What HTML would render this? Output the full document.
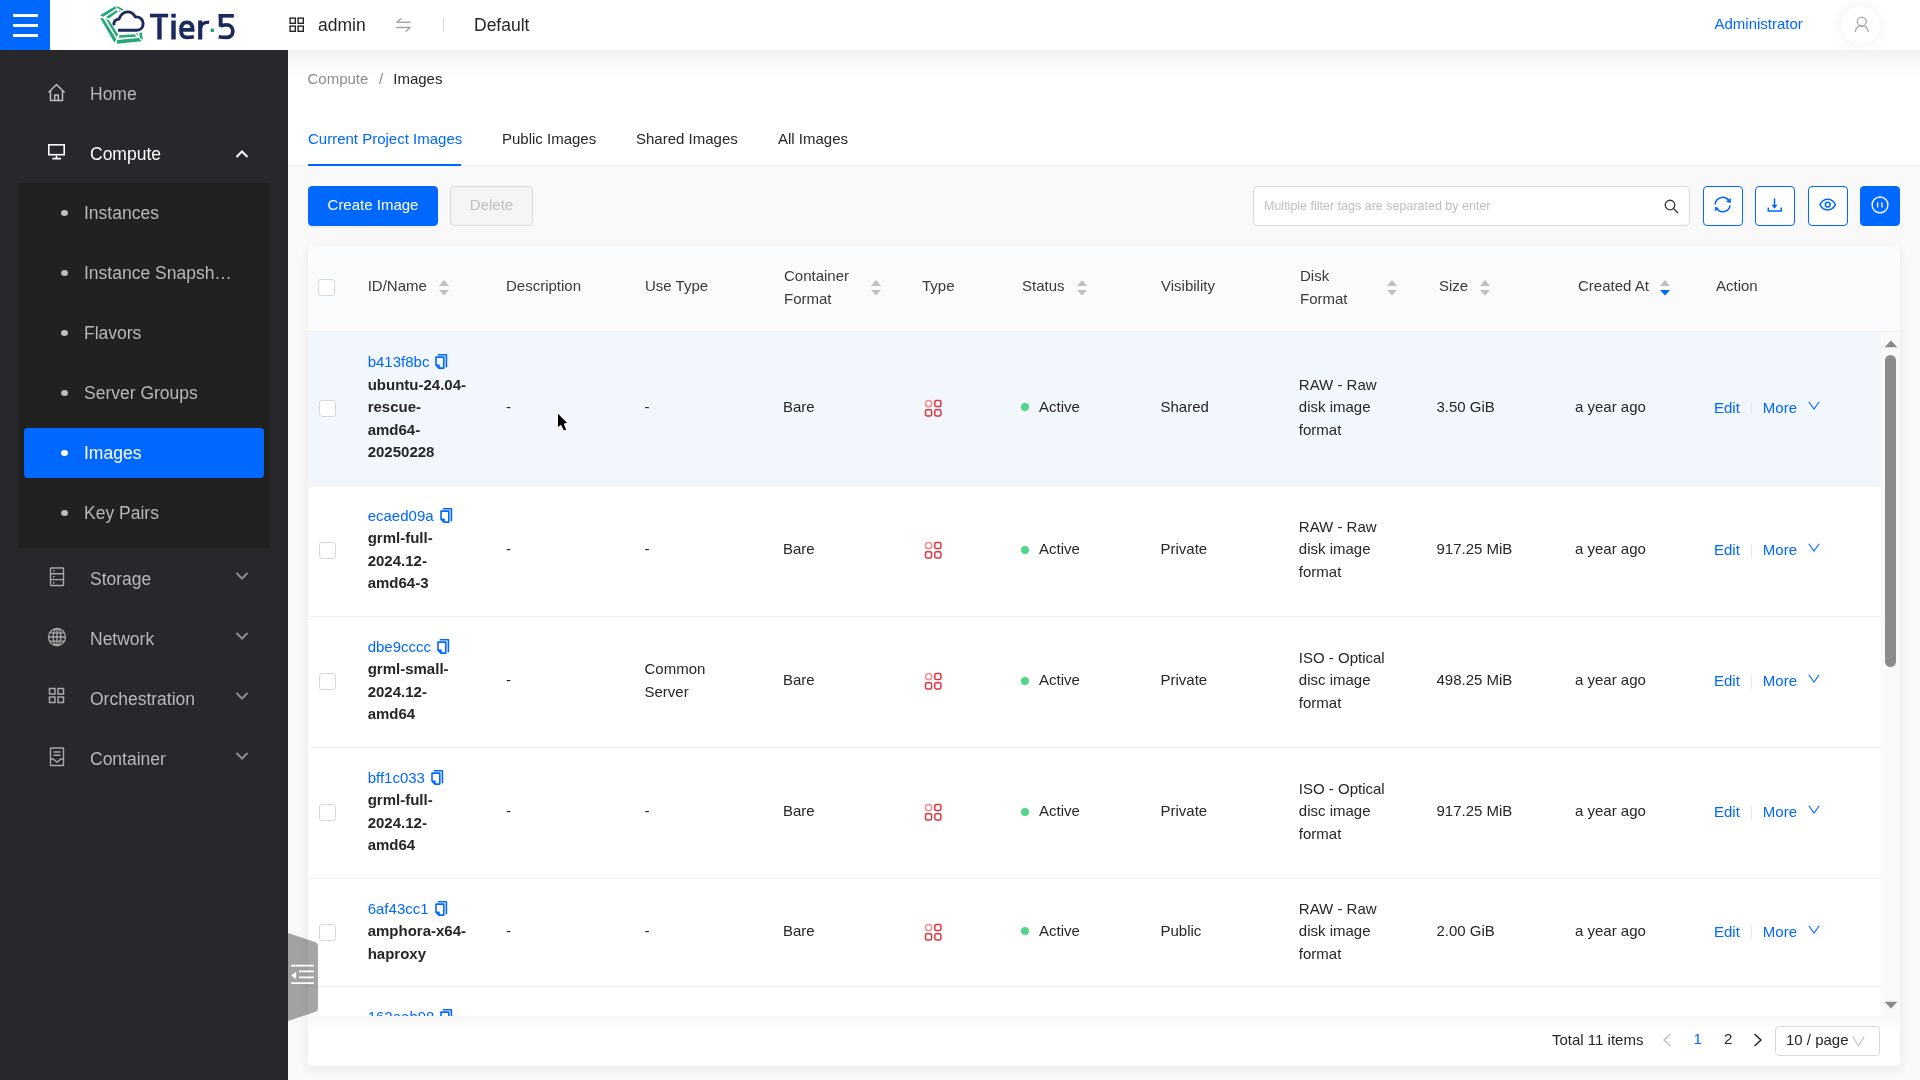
<!DOCTYPE html>
<html><head><meta charset="utf-8">
<style>
*{box-sizing:border-box;margin:0;padding:0}
body{will-change:transform}
html,body{width:1920px;height:1080px;overflow:hidden;background:#f9f9f9;font-family:"Liberation Sans",sans-serif;color:#262626}
.abs{position:absolute}
#hdr{position:absolute;left:0;top:0;width:1920px;height:50px;background:#fff;z-index:5}
#burger{position:absolute;left:0;top:0;width:50px;height:50px;background:#0068ff}
#burger i{position:absolute;left:13px;width:25px;height:3px;background:#fff}
#side{position:absolute;left:0;top:50px;width:288px;height:1030px;background:#27272c;z-index:3}
.mi{position:absolute;left:0;width:288px;height:60px;font-size:17.5px;color:#bfbfbf;line-height:60px}
.mi .tx{position:absolute;left:90px;top:0.5px}
#sub{position:absolute;left:18px;top:133px;width:252px;height:365px;background:#212121;border-radius:4px}
.si{position:absolute;left:6px;width:240px;height:50px;line-height:50px;font-size:17.5px;color:#b8b8b8;border-radius:4px}
.si .dot{position:absolute;left:37px;top:22px;width:7px;height:6px;border-radius:50%;background:#bfbfbf}
.si .tx{position:absolute;left:60px;top:0.4px}
#main{position:absolute;left:288px;top:50px;width:1632px;height:1030px;background:#f9f9f9}
#topw{position:absolute;left:0;top:0;width:1632px;height:116px;background:#fff;border-bottom:1px solid #f0f0f0}
#hshadow{position:absolute;left:288px;top:50px;width:1632px;height:28px;background:linear-gradient(rgba(0,0,0,0.05),rgba(0,0,0,0));z-index:2}
.tab{position:absolute;top:78px;font-size:15px;line-height:22px;color:#262626}
.btn{position:absolute;top:136px;height:40px;border-radius:4px;font-size:15px;line-height:36.8px;text-align:center}
.ibtn{position:absolute;top:136px;width:40px;height:40px;border:1px solid #0068ff;border-radius:4px;background:#fff}
.ibtn svg{position:absolute;left:8px;top:8px}
#card{position:absolute;left:20px;top:196px;width:1592px;height:820px;background:#fff;border-radius:4px;box-shadow:0 3px 12px rgba(0,0,0,0.07);overflow:hidden}
#thead{position:absolute;left:0;top:0;width:1592px;height:86px;background:#fafbfd;border-bottom:1px solid #f0f0f0}
.th{position:absolute;top:-3px;height:86px;font-size:15px;line-height:22.5px;color:#3a3a3a;display:flex;align-items:center}
.sorter{position:absolute}
.cb{position:absolute;width:17px;height:17px;border:1px solid #d9d9d9;border-radius:3px;background:#fff}
#tbody{position:absolute;left:0;top:86px;width:1573px;height:684px;overflow:hidden}
.row{position:absolute;left:0;width:1573px;border-bottom:1px solid #f0f0f0}
.td{position:absolute;top:-1px;height:100%;font-size:15px;line-height:22.5px;color:#262626;display:flex;align-items:center}
.idl{color:#0068ff}
.nm{font-weight:bold;color:#262626}
.st .dt{display:inline-block;width:8px;height:8px;border-radius:50%;background:#52d68a;margin-right:10px}
.act{color:#0068ff}
</style></head><body>
<div id="hdr">
  <div id="burger"><i style="top:14px"></i><i style="top:24px"></i><i style="top:34px"></i></div>
  <svg class="abs" style="left:98px;top:3px" width="48" height="44" viewBox="0 0 1178 1080">
    <g fill="#22a877">
      <polygon points="50,302 430,72 445,132 128,338"/>
      <polygon points="198,342 460,170 485,212 262,378"/>
      <polygon points="470,75 630,158 598,192 470,122"/>
      <polygon points="508,178 552,198 540,218 520,212"/>
      <polygon points="50,365 132,378 450,890 405,975"/>
      <polygon points="198,400 265,420 492,772 455,832"/>
      <polygon points="520,792 900,765 945,826 518,856"/>
      <polygon points="470,910 1000,860 1075,940 465,1000"/>
      <polygon points="1010,742 1075,720 1102,902 1030,860"/>
      <polygon points="935,740 968,735 982,780 958,786"/>
    </g>
    <path d="M398,548 C368,470 420,402 512,396 C562,282 640,218 725,218 C820,218 880,272 915,342 C1040,332 1108,420 1108,502 C1108,600 1040,668 955,668 L490,668" fill="none" stroke="#1b2a5c" stroke-width="72" stroke-linejoin="round"/>
  </svg>
  <svg class="abs" style="left:145px;top:8px" width="100" height="37" viewBox="0 0 1920 710">
    <g fill="#1b2a5c">
      <rect x="95" y="110" width="350" height="70"/>
      <rect x="236" y="178" width="84" height="427"/>
      <rect x="505" y="110" width="85" height="75"/>
      <rect x="505" y="240" width="85" height="365"/>
      <rect x="1020" y="240" width="80" height="365"/>
      <rect x="1415" y="115" width="290" height="70"/>
      <rect x="1415" y="115" width="75" height="245"/>
    </g>
    <g fill="none" stroke="#1b2a5c" stroke-width="72">
      <path d="M690,420 H914 C914,310 870,276 805,276 C720,276 691,340 691,420 C691,515 725,565 805,565 C855,565 905,558 938,552"/>
      <path d="M1062,400 C1070,315 1120,272 1232,272" stroke-width="62"/>
      <path d="M1450,350 C1480,332 1520,326 1565,326 C1640,326 1686,376 1686,446 C1686,520 1632,566 1560,566 C1500,566 1455,560 1415,552"/>
    </g>
    <rect x="1260" y="395" width="66" height="66" fill="#22a877"/>
    <circle cx="1756" cy="152" r="22" fill="none" stroke="#b8bfd3" stroke-width="6"/>
  </svg>
  <svg class="abs" style="left:289px;top:17px" width="16" height="16" viewBox="0 0 16 16" fill="none" stroke="#262626" stroke-width="1.4"><rect x="1.1" y="1.1" width="5.2" height="5.2"/><rect x="9.1" y="1.1" width="5.2" height="5.2"/><rect x="1.1" y="9.1" width="5.2" height="5.2"/><rect x="9.1" y="9.1" width="5.2" height="5.2"/></svg>
  <div class="abs" style="left:318px;top:14px;font-size:17.5px;line-height:22px;color:#262626">admin</div>
  <svg class="abs" style="left:395px;top:17px" width="17" height="16" viewBox="0 0 17 16" fill="none" stroke="#a6a6a6" stroke-width="1.4"><path d="M1.2,5.3 H15.7 M1.8,5.3 L6.4,1.3"/><path d="M1.2,10.5 H15.7 M15.2,10.5 L10.6,14.7"/></svg>
  <div class="abs" style="left:443px;top:18px;width:1px;height:14px;background:#d9d9d9"></div>
  <div class="abs" style="left:474px;top:14px;font-size:17.5px;line-height:22px;color:#262626">Default</div>
  <div class="abs" style="left:1714.5px;top:13px;font-size:15px;line-height:22px;color:#0068ff">Administrator</div>
  <div class="abs" style="left:1841px;top:5.5px;width:39px;height:38.5px;border-radius:50%;background:#fff;box-shadow:0 0 14px rgba(0,0,0,0.07)">
    <svg class="abs" style="left:0;top:0" width="39" height="38" viewBox="0 0 39 38" fill="none" stroke="#a8a8a8" stroke-width="1.3"><circle cx="20.75" cy="15.55" r="4.5"/><path d="M14.2,26 C14.5,22 17.2,19.8 20.75,19.8 C24.3,19.8 27,22 27.3,26"/></svg>
  </div>
</div>
<div id="side">
  <div class="mi" style="top:13px;color:#b8b8b8"><svg class="abs" style="left:47px;top:19.5px" width="19" height="19" viewBox="0 0 19 19" fill="none" stroke="#bfbfbf" stroke-width="1.5" stroke-linejoin="round"><path d="M1.5,9.5 L9.5,1.5 L17.5,9.5"/><path d="M3.5,7.5 V17.5 H15.5 V7.5"/><path d="M7.7,17.5 V12 H11.3 V17.5"/></svg><span class="tx">Home</span></div>
  <div class="mi" style="top:73px;color:#fff"><svg class="abs" style="left:47px;top:20px" width="19" height="17" viewBox="0 0 19 17" fill="none" stroke="#fff" stroke-width="1.6"><rect x="1.8" y="1.8" width="15.4" height="9.9"/><path d="M9.5,12.5 V15 M5.3,15.6 H14"/></svg><span class="tx">Compute</span><svg class="abs" style="left:235px;top:25.5px" width="14" height="10" viewBox="0 0 14 10" fill="none" stroke="#fff" stroke-width="2"><path d="M1.5,8 L7,2.5 L12.5,8"/></svg></div>
  <div id="sub">
    <div class="si" style="top:5px"><span class="dot"></span><span class="tx">Instances</span></div>
    <div class="si" style="top:65px"><span class="dot"></span><span class="tx">Instance Snapsh…</span></div>
    <div class="si" style="top:125px"><span class="dot"></span><span class="tx">Flavors</span></div>
    <div class="si" style="top:185px"><span class="dot"></span><span class="tx">Server Groups</span></div>
    <div class="si" style="top:245px;background:#0068ff;color:#fff"><span class="dot" style="background:#fff"></span><span class="tx">Images</span></div>
    <div class="si" style="top:305px"><span class="dot"></span><span class="tx">Key Pairs</span></div>
  </div>
  <div class="mi" style="top:498px;color:#b8b8b8"><svg class="abs" style="left:49px;top:19px" width="16" height="20" viewBox="0 0 16 20" fill="none" stroke="#a8a8a8" stroke-width="1.4"><rect x="1.5" y="1" width="13" height="17.5" rx="0.5"/><path d="M1.5,6.8 H14.5 M1.5,12.6 H14.5"/><path d="M4,4 H5.5 M4,9.8 H5.5 M4,15.6 H5.5" stroke-width="1.6"/></svg><span class="tx">Storage</span><svg class="abs" style="left:235px;top:23px" width="14" height="10" viewBox="0 0 14 10" fill="none" stroke="#8f8f8f" stroke-width="2"><path d="M1.5,2 L7,7.5 L12.5,2"/></svg></div>
  <div class="mi" style="top:558px;color:#b8b8b8"><svg class="abs" style="left:47px;top:19px" width="20" height="20" viewBox="0 0 20 20" fill="none" stroke="#a8a8a8" stroke-width="1.3"><circle cx="10" cy="10" r="8.5"/><ellipse cx="10" cy="10" rx="3.8" ry="8.5"/><path d="M10,1.5 V18.5 M1.5,10 H18.5 M2.8,5.8 H17.2 M2.8,14.2 H17.2"/></svg><span class="tx">Network</span><svg class="abs" style="left:235px;top:23px" width="14" height="10" viewBox="0 0 14 10" fill="none" stroke="#8f8f8f" stroke-width="2"><path d="M1.5,2 L7,7.5 L12.5,2"/></svg></div>
  <div class="mi" style="top:618px;color:#b8b8b8"><svg class="abs" style="left:48px;top:19px" width="17" height="17" viewBox="0 0 17 17" fill="none" stroke="#a8a8a8" stroke-width="1.5"><rect x="1.5" y="1.5" width="5.5" height="5.5"/><rect x="10" y="1.5" width="5.5" height="5.5"/><rect x="1.5" y="10" width="5.5" height="5.5"/><rect x="10" y="10" width="5.5" height="5.5"/></svg><span class="tx">Orchestration</span><svg class="abs" style="left:235px;top:23px" width="14" height="10" viewBox="0 0 14 10" fill="none" stroke="#8f8f8f" stroke-width="2"><path d="M1.5,2 L7,7.5 L12.5,2"/></svg></div>
  <div class="mi" style="top:678px;color:#b8b8b8"><svg class="abs" style="left:49px;top:19px" width="16" height="20" viewBox="0 0 16 20" fill="none" stroke="#a8a8a8" stroke-width="1.4"><rect x="1.5" y="1" width="13" height="17.5" rx="0.5"/><path d="M4.5,5 H11.5 M4.5,8.3 H11.5"/><path d="M1.5,12 H4 L8,15 L12,12 H14.5"/></svg><span class="tx">Container</span><svg class="abs" style="left:235px;top:23px" width="14" height="10" viewBox="0 0 14 10" fill="none" stroke="#8f8f8f" stroke-width="2"><path d="M1.5,2 L7,7.5 L12.5,2"/></svg></div>
</div>

<div id="main">
<div id="topw">
  <div class="abs" style="left:19.5px;top:18.3px;font-size:15px;line-height:22px;color:#8c8c8c">Compute<span style="display:inline-block;width:10.7px"></span>/<span style="display:inline-block;width:10px"></span><span style="color:#262626">Images</span></div>
  <div class="tab" style="left:20px;color:#0068ff">Current Project Images</div>
  <div class="abs" style="left:20px;top:114px;width:153px;height:2px;background:#0068ff"></div>
  <div class="tab" style="left:214px">Public Images</div>
  <div class="tab" style="left:348px">Shared Images</div>
  <div class="tab" style="left:490px">All Images</div>
</div>
<div class="btn" style="left:20px;width:130px;background:#0068ff;color:#fff;border:1px solid #0068ff;box-shadow:0 2px 0 rgba(0,0,0,0.045)">Create Image</div>
<div class="btn" style="left:162px;width:83px;background:#f5f5f5;color:#bfbfbf;border:1px solid #d9d9d9">Delete</div>
<div class="abs" style="left:965px;top:136px;width:437px;height:40px;border:1px solid #d9d9d9;border-radius:4px;background:#fff">
  <div class="abs" style="left:10px;top:11px;font-size:12.5px;line-height:16px;color:#bfbfbf">Multiple filter tags are separated by enter</div>
  <svg class="abs" style="left:410px;top:11.5px" width="15" height="15" viewBox="0 0 15 15" fill="none" stroke="#3a3a3a" stroke-width="1.35"><circle cx="6" cy="6" r="4.8"/><path d="M9.5,9.5 L14,14"/></svg>
</div>
<div class="ibtn" style="left:1415px"><svg width="22" height="22" viewBox="0 0 22 22" fill="none" stroke="#0068ff" stroke-width="1.5"><path d="M3.2,9.6 A7.5,7.5 0 0 1 16.6,5.2"/><path d="M18.1,10.3 A7.5,7.5 0 0 1 4.9,14"/><path d="M18.5,3.4 L18.5,7.7 L14.5,6.6Z" fill="#0068ff" stroke-width="0.6" stroke-linejoin="round"/><path d="M3.2,12.1 L3.2,15.9 L6.4,13.3Z" fill="#0068ff" stroke-width="0.6" stroke-linejoin="round"/></svg></div>
<div class="ibtn" style="left:1467px"><svg width="22" height="22" viewBox="0 0 22 22" fill="none" stroke="#0068ff" stroke-width="1.5"><path d="M10.5,3.3 V11.6"/><path d="M8.4,9.8 L10.5,12.4 L12.6,9.8" stroke-width="1.7"/><path d="M4.3,12.4 V16 H17.3 V12.4"/></svg></div>
<div class="ibtn" style="left:1520px"><svg width="22" height="22" viewBox="0 0 22 22" fill="none" stroke="#0068ff" stroke-width="1.5"><path d="M3,9.6 C5,5.6 7.5,4.3 10.7,4.3 C13.9,4.3 16.4,5.6 18.4,9.6 C16.4,13.6 13.9,14.9 10.7,14.9 C7.5,14.9 5,13.6 3,9.6Z"/><circle cx="10.7" cy="9.6" r="2.4"/></svg></div>
<div class="ibtn" style="left:1572px;background:#0068ff"><svg width="22" height="22" viewBox="0 0 22 22" fill="none" stroke="#fff" stroke-width="1.4"><circle cx="11" cy="9.9" r="7.9"/><path d="M8.6,7.2 V12.6 M13,7.2 V12.6" stroke-width="1.3"/></svg></div>
<div id="card">
  <div id="thead">
    <div class="cb" style="left:10px;top:33px"></div>
    <div class="th" style="left:59.7px">ID/Name</div><svg class="sorter" style="left:131px;top:33px" width="10" height="18" viewBox="0 0 10 18"><path d="M5,1 L10,6.9 H0Z" fill="#bfbfbf"/><path d="M0,11.1 H10 L5,16.6Z" fill="#bfbfbf"/></svg>
    <div class="th" style="left:198px">Description</div>
    <div class="th" style="left:337px">Use Type</div>
    <div class="th" style="left:476px;top:-1.5px">Container<br>Format</div><svg class="sorter" style="left:563px;top:33px" width="10" height="18" viewBox="0 0 10 18"><path d="M5,1 L10,6.9 H0Z" fill="#bfbfbf"/><path d="M0,11.1 H10 L5,16.6Z" fill="#bfbfbf"/></svg>
    <div class="th" style="left:614px">Type</div>
    <div class="th" style="left:714px">Status</div><svg class="sorter" style="left:769px;top:33px" width="10" height="18" viewBox="0 0 10 18"><path d="M5,1 L10,6.9 H0Z" fill="#bfbfbf"/><path d="M0,11.1 H10 L5,16.6Z" fill="#bfbfbf"/></svg>
    <div class="th" style="left:853px">Visibility</div>
    <div class="th" style="left:992px;top:-1.5px">Disk<br>Format</div><svg class="sorter" style="left:1079px;top:33px" width="10" height="18" viewBox="0 0 10 18"><path d="M5,1 L10,6.9 H0Z" fill="#bfbfbf"/><path d="M0,11.1 H10 L5,16.6Z" fill="#bfbfbf"/></svg>
    <div class="th" style="left:1131px">Size</div><svg class="sorter" style="left:1172px;top:33px" width="10" height="18" viewBox="0 0 10 18"><path d="M5,1 L10,6.9 H0Z" fill="#bfbfbf"/><path d="M0,11.1 H10 L5,16.6Z" fill="#bfbfbf"/></svg>
    <div class="th" style="left:1270px">Created At</div><svg class="sorter" style="left:1352px;top:33px" width="10" height="18" viewBox="0 0 10 18"><path d="M5,1 L10,6.9 H0Z" fill="#bfbfbf"/><path d="M0,11.1 H10 L5,16.6Z" fill="#0068ff"/></svg>
    <div class="th" style="left:1408px">Action</div>
  </div>
  <div id="tbody">
<div class="row" style="top:0.0px;height:153.5px;background:#f2f6fd;"><div class="cb" style="left:11px;top:67.75px"></div><div class="td" style="left:59.7px;padding:20px 0;align-items:flex-start"><div><div class="idl">b413f8bc<svg style="margin-left:6px;position:relative;top:3px" width="13" height="16" viewBox="0 0 13 16" fill="none" stroke="#0068ff" stroke-width="1.6" stroke-linejoin="round"><path d="M3.4,0.8 H11.4 V12.8" stroke-linecap="round"/><path d="M1,3.1 H8.8 V14.1 H4 L1,11.2 Z"/><path d="M1,11.2 H4 V14.1"/></svg></div><div class="nm">ubuntu-24.04-</div><div class="nm">rescue-</div><div class="nm">amd64-</div><div class="nm">20250228</div></div></div><div class="td" style="left:198px">-</div><div class="td" style="left:336.5px"><div>-</div></div><div class="td" style="left:475px">Bare</div><div class="td" style="left:616.25px"><svg style="position:relative;top:0.5px" width="18" height="18" viewBox="0 0 18 18" fill="none" stroke="#dc3540" stroke-width="1.5"><circle cx="4.65" cy="4.55" r="3.15" stroke="#f28d93"/><rect x="10.8" y="1.5" width="6.1" height="6.1" rx="1.4"/><rect x="1.5" y="10.8" width="6.1" height="6.1" rx="1.4"/><rect x="10.8" y="10.8" width="6.1" height="6.1" rx="1.4"/></svg></div><div class="td st" style="left:713px"><span class="dt"></span>Active</div><div class="td" style="left:852.5px">Shared</div><div class="td" style="left:990.8px"><div>RAW - Raw<br>disk image<br>format</div></div><div class="td" style="left:1128.5px">3.50 GiB</div><div class="td" style="left:1267px">a year ago</div><div class="td act" style="top:0;left:1406px">Edit<span style="display:inline-block;width:1px;height:14px;background:#e8e8e8;margin:0 11px"></span>More<svg style="margin-left:11px;position:relative;top:-3px" width="12" height="9" viewBox="0 0 12 9" fill="none" stroke="#0068ff" stroke-width="1.1"><path d="M0.8,0.8 L6,8 L11.2,0.8"/></svg></div></div>
<div class="row" style="top:153.5px;height:131px;"><div class="cb" style="left:11px;top:56.5px"></div><div class="td" style="left:59.7px;padding:20px 0;align-items:flex-start"><div><div class="idl">ecaed09a<svg style="margin-left:6px;position:relative;top:3px" width="13" height="16" viewBox="0 0 13 16" fill="none" stroke="#0068ff" stroke-width="1.6" stroke-linejoin="round"><path d="M3.4,0.8 H11.4 V12.8" stroke-linecap="round"/><path d="M1,3.1 H8.8 V14.1 H4 L1,11.2 Z"/><path d="M1,11.2 H4 V14.1"/></svg></div><div class="nm">grml-full-</div><div class="nm">2024.12-</div><div class="nm">amd64-3</div></div></div><div class="td" style="left:198px">-</div><div class="td" style="left:336.5px"><div>-</div></div><div class="td" style="left:475px">Bare</div><div class="td" style="left:616.25px"><svg style="position:relative;top:0.5px" width="18" height="18" viewBox="0 0 18 18" fill="none" stroke="#dc3540" stroke-width="1.5"><circle cx="4.65" cy="4.55" r="3.15" stroke="#f28d93"/><rect x="10.8" y="1.5" width="6.1" height="6.1" rx="1.4"/><rect x="1.5" y="10.8" width="6.1" height="6.1" rx="1.4"/><rect x="10.8" y="10.8" width="6.1" height="6.1" rx="1.4"/></svg></div><div class="td st" style="left:713px"><span class="dt"></span>Active</div><div class="td" style="left:852.5px">Private</div><div class="td" style="left:990.8px"><div>RAW - Raw<br>disk image<br>format</div></div><div class="td" style="left:1128.5px">917.25 MiB</div><div class="td" style="left:1267px">a year ago</div><div class="td act" style="top:0;left:1406px">Edit<span style="display:inline-block;width:1px;height:14px;background:#e8e8e8;margin:0 11px"></span>More<svg style="margin-left:11px;position:relative;top:-3px" width="12" height="9" viewBox="0 0 12 9" fill="none" stroke="#0068ff" stroke-width="1.1"><path d="M0.8,0.8 L6,8 L11.2,0.8"/></svg></div></div>
<div class="row" style="top:284.5px;height:131px;"><div class="cb" style="left:11px;top:56.5px"></div><div class="td" style="left:59.7px;padding:20px 0;align-items:flex-start"><div><div class="idl">dbe9cccc<svg style="margin-left:6px;position:relative;top:3px" width="13" height="16" viewBox="0 0 13 16" fill="none" stroke="#0068ff" stroke-width="1.6" stroke-linejoin="round"><path d="M3.4,0.8 H11.4 V12.8" stroke-linecap="round"/><path d="M1,3.1 H8.8 V14.1 H4 L1,11.2 Z"/><path d="M1,11.2 H4 V14.1"/></svg></div><div class="nm">grml-small-</div><div class="nm">2024.12-</div><div class="nm">amd64</div></div></div><div class="td" style="left:198px">-</div><div class="td" style="left:336.5px"><div>Common<br>Server</div></div><div class="td" style="left:475px">Bare</div><div class="td" style="left:616.25px"><svg style="position:relative;top:0.5px" width="18" height="18" viewBox="0 0 18 18" fill="none" stroke="#dc3540" stroke-width="1.5"><circle cx="4.65" cy="4.55" r="3.15" stroke="#f28d93"/><rect x="10.8" y="1.5" width="6.1" height="6.1" rx="1.4"/><rect x="1.5" y="10.8" width="6.1" height="6.1" rx="1.4"/><rect x="10.8" y="10.8" width="6.1" height="6.1" rx="1.4"/></svg></div><div class="td st" style="left:713px"><span class="dt"></span>Active</div><div class="td" style="left:852.5px">Private</div><div class="td" style="left:990.8px"><div>ISO - Optical<br>disc image<br>format</div></div><div class="td" style="left:1128.5px">498.25 MiB</div><div class="td" style="left:1267px">a year ago</div><div class="td act" style="top:0;left:1406px">Edit<span style="display:inline-block;width:1px;height:14px;background:#e8e8e8;margin:0 11px"></span>More<svg style="margin-left:11px;position:relative;top:-3px" width="12" height="9" viewBox="0 0 12 9" fill="none" stroke="#0068ff" stroke-width="1.1"><path d="M0.8,0.8 L6,8 L11.2,0.8"/></svg></div></div>
<div class="row" style="top:415.5px;height:131px;"><div class="cb" style="left:11px;top:56.5px"></div><div class="td" style="left:59.7px;padding:20px 0;align-items:flex-start"><div><div class="idl">bff1c033<svg style="margin-left:6px;position:relative;top:3px" width="13" height="16" viewBox="0 0 13 16" fill="none" stroke="#0068ff" stroke-width="1.6" stroke-linejoin="round"><path d="M3.4,0.8 H11.4 V12.8" stroke-linecap="round"/><path d="M1,3.1 H8.8 V14.1 H4 L1,11.2 Z"/><path d="M1,11.2 H4 V14.1"/></svg></div><div class="nm">grml-full-</div><div class="nm">2024.12-</div><div class="nm">amd64</div></div></div><div class="td" style="left:198px">-</div><div class="td" style="left:336.5px"><div>-</div></div><div class="td" style="left:475px">Bare</div><div class="td" style="left:616.25px"><svg style="position:relative;top:0.5px" width="18" height="18" viewBox="0 0 18 18" fill="none" stroke="#dc3540" stroke-width="1.5"><circle cx="4.65" cy="4.55" r="3.15" stroke="#f28d93"/><rect x="10.8" y="1.5" width="6.1" height="6.1" rx="1.4"/><rect x="1.5" y="10.8" width="6.1" height="6.1" rx="1.4"/><rect x="10.8" y="10.8" width="6.1" height="6.1" rx="1.4"/></svg></div><div class="td st" style="left:713px"><span class="dt"></span>Active</div><div class="td" style="left:852.5px">Private</div><div class="td" style="left:990.8px"><div>ISO - Optical<br>disc image<br>format</div></div><div class="td" style="left:1128.5px">917.25 MiB</div><div class="td" style="left:1267px">a year ago</div><div class="td act" style="top:0;left:1406px">Edit<span style="display:inline-block;width:1px;height:14px;background:#e8e8e8;margin:0 11px"></span>More<svg style="margin-left:11px;position:relative;top:-3px" width="12" height="9" viewBox="0 0 12 9" fill="none" stroke="#0068ff" stroke-width="1.1"><path d="M0.8,0.8 L6,8 L11.2,0.8"/></svg></div></div>
<div class="row" style="top:546.5px;height:108.5px;"><div class="cb" style="left:11px;top:45.25px"></div><div class="td" style="left:59.7px;padding:20px 0;align-items:flex-start"><div><div class="idl">6af43cc1<svg style="margin-left:6px;position:relative;top:3px" width="13" height="16" viewBox="0 0 13 16" fill="none" stroke="#0068ff" stroke-width="1.6" stroke-linejoin="round"><path d="M3.4,0.8 H11.4 V12.8" stroke-linecap="round"/><path d="M1,3.1 H8.8 V14.1 H4 L1,11.2 Z"/><path d="M1,11.2 H4 V14.1"/></svg></div><div class="nm">amphora-x64-</div><div class="nm">haproxy</div></div></div><div class="td" style="left:198px">-</div><div class="td" style="left:336.5px"><div>-</div></div><div class="td" style="left:475px">Bare</div><div class="td" style="left:616.25px"><svg style="position:relative;top:0.5px" width="18" height="18" viewBox="0 0 18 18" fill="none" stroke="#dc3540" stroke-width="1.5"><circle cx="4.65" cy="4.55" r="3.15" stroke="#f28d93"/><rect x="10.8" y="1.5" width="6.1" height="6.1" rx="1.4"/><rect x="1.5" y="10.8" width="6.1" height="6.1" rx="1.4"/><rect x="10.8" y="10.8" width="6.1" height="6.1" rx="1.4"/></svg></div><div class="td st" style="left:713px"><span class="dt"></span>Active</div><div class="td" style="left:852.5px">Public</div><div class="td" style="left:990.8px"><div>RAW - Raw<br>disk image<br>format</div></div><div class="td" style="left:1128.5px">2.00 GiB</div><div class="td" style="left:1267px">a year ago</div><div class="td act" style="top:0;left:1406px">Edit<span style="display:inline-block;width:1px;height:14px;background:#e8e8e8;margin:0 11px"></span>More<svg style="margin-left:11px;position:relative;top:-3px" width="12" height="9" viewBox="0 0 12 9" fill="none" stroke="#0068ff" stroke-width="1.1"><path d="M0.8,0.8 L6,8 L11.2,0.8"/></svg></div></div>
<div class="row" style="top:655.0px;height:131px;"><div class="cb" style="left:11px;top:56.5px"></div><div class="td" style="left:59.7px;padding:20px 0;align-items:flex-start"><div><div class="idl">162aab98<svg style="margin-left:6px;position:relative;top:3px" width="13" height="16" viewBox="0 0 13 16" fill="none" stroke="#0068ff" stroke-width="1.6" stroke-linejoin="round"><path d="M3.4,0.8 H11.4 V12.8" stroke-linecap="round"/><path d="M1,3.1 H8.8 V14.1 H4 L1,11.2 Z"/><path d="M1,11.2 H4 V14.1"/></svg></div><div class="nm">cirros-0.6.2-</div><div class="nm">x86_64</div></div></div><div class="td" style="left:198px">-</div><div class="td" style="left:336.5px"><div>-</div></div><div class="td" style="left:475px">Bare</div><div class="td" style="left:616.25px"><svg style="position:relative;top:0.5px" width="18" height="18" viewBox="0 0 18 18" fill="none" stroke="#dc3540" stroke-width="1.5"><circle cx="4.65" cy="4.55" r="3.15" stroke="#f28d93"/><rect x="10.8" y="1.5" width="6.1" height="6.1" rx="1.4"/><rect x="1.5" y="10.8" width="6.1" height="6.1" rx="1.4"/><rect x="10.8" y="10.8" width="6.1" height="6.1" rx="1.4"/></svg></div><div class="td st" style="left:713px"><span class="dt"></span>Active</div><div class="td" style="left:852.5px">Public</div><div class="td" style="left:990.8px"><div>QCOW2 - QEMU<br>image<br>format</div></div><div class="td" style="left:1128.5px">20.47 MiB</div><div class="td" style="left:1267px">a year ago</div><div class="td act" style="top:0;left:1406px">Edit<span style="display:inline-block;width:1px;height:14px;background:#e8e8e8;margin:0 11px"></span>More<svg style="margin-left:11px;position:relative;top:-3px" width="12" height="9" viewBox="0 0 12 9" fill="none" stroke="#0068ff" stroke-width="1.1"><path d="M0.8,0.8 L6,8 L11.2,0.8"/></svg></div></div>
  </div>
  <div class="abs" style="left:1573px;top:86px;width:19px;height:684px;background:#fafafa">
    <svg class="abs" style="left:2.8px;top:8px" width="14" height="8" viewBox="0 0 14 8"><path d="M7,0.5 L13.4,7.2 H0.6Z" fill="#8a8a8a"/></svg>
    <div class="abs" style="left:4px;top:23px;width:11px;height:312px;border-radius:6px;background:#8c8c8c"></div>
    <svg class="abs" style="left:2.8px;top:669px" width="14" height="8" viewBox="0 0 14 8"><path d="M7,7.5 L13.4,0.8 H0.6Z" fill="#8a8a8a"/></svg>
  </div>
  <div class="abs" style="left:0;top:770px;width:1592px;height:14px;background:linear-gradient(rgba(0,0,0,0.035),rgba(0,0,0,0))"></div>
  <div class="abs" style="left:1244px;top:783px;font-size:15px;line-height:22px;color:#262626">Total 11 items</div>
  <svg class="abs" style="left:1354px;top:786.5px" width="10" height="14" viewBox="0 0 10 14" fill="none" stroke="#bfbfbf" stroke-width="1.5"><path d="M8.5,1 L2,7 L8.5,13"/></svg>
  <div class="abs" style="left:1385.5px;top:781.5px;font-size:15px;line-height:22px;color:#0068ff">1</div>
  <div class="abs" style="left:1416px;top:781.5px;font-size:15px;line-height:22px;color:#262626">2</div>
  <svg class="abs" style="left:1445px;top:786.5px" width="10" height="14" viewBox="0 0 10 14" fill="none" stroke="#262626" stroke-width="1.5"><path d="M1.5,1 L8,7 L1.5,13"/></svg>
  <div class="abs" style="left:1467px;top:780px;width:105px;height:30px;border:1px solid #d9d9d9;border-radius:4px">
    <div class="abs" style="left:10px;top:1.5px;font-size:15px;line-height:22px;color:#262626">10 / page</div>
    <svg class="abs" style="left:76px;top:9px" width="13" height="11" viewBox="0 0 13 11" fill="none" stroke="#bfbfbf" stroke-width="1.1"><path d="M0.8,0.8 L6.5,9.8 L12.2,0.8"/></svg>
  </div>
</div>
</div>
<div id="hshadow"></div>
<div class="abs" style="left:288px;top:933px;width:30px;height:88px;z-index:4">
  <svg width="30" height="88" viewBox="0 0 30 88"><path d="M0,0 L27,9 Q30,10 30,13 V75 Q30,78 27,79 L0,88Z" fill="rgba(0,0,0,0.35)"/><path d="M3.1,32.7 H25.8 M11,38.3 H25.8 M11,44.3 H25.8 M3.1,50.1 H25.8" stroke="#fff" stroke-width="1.8"/><path d="M3.1,42.5 L8.2,38.8 V46.2Z" fill="#fff"/></svg>
</div>
<svg class="abs" style="left:556px;top:410px;z-index:9" width="16" height="24" viewBox="0 0 16 24"><path d="M2,3.8 V17 L5,14.7 L7.7,20.3 L10.2,19.7 L7.7,13.7 L11,12.7Z" fill="#000" stroke="#fff" stroke-width="2.4" stroke-linejoin="round" paint-order="stroke"/></svg>
</body></html>
